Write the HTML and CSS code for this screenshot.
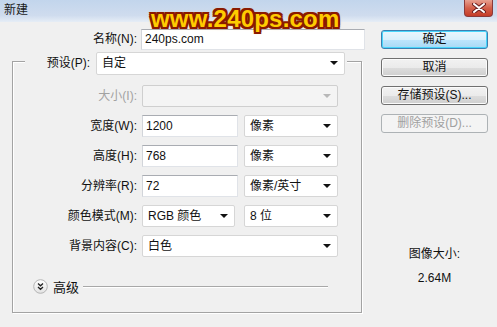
FILE: index.html
```html
<!DOCTYPE html>
<html>
<head>
    <meta charset="utf-8">
    <title>新建</title>
    <link rel="stylesheet" href="styles.css">
</head>
<body>
    <div class="dialog">
        <div class="titlebar">
            <span class="title">新建</span>
            <span class="close">
                <svg width="14" height="10" viewBox="0 0 14 10">
                    <path d="M2 1 L12 9 M12 1 L2 9" stroke="#6b2020" stroke-width="4" stroke-linecap="round"/>
                    <path d="M2 1 L12 9 M12 1 L2 9" stroke="#ffffff" stroke-width="2" stroke-linecap="round"/>
                </svg>
            </span>
        </div>
        <div class="watermark">www.240ps.com</div>

        <div class="content">
            <div class="form">
                <div class="name-row">
                    <label class="name-label">名称(N):</label>
                    <div class="textbox name-box">240ps.com</div>
                </div>

                <div class="group">
                    <div class="preset-row">
                        <label class="preset-label">预设(P):</label>
                        <div class="select preset-select">自定<span class="arrow"></span></div>
                    </div>

                    <div class="row">
                        <label class="lbl disabled">大小(I):</label>
                        <div class="select off wide"><span class="arrow"></span></div>
                    </div>
                    <div class="row">
                        <label class="lbl">宽度(W):</label>
                        <div class="textbox num">1200</div>
                        <div class="select unit">像素<span class="arrow"></span></div>
                    </div>
                    <div class="row">
                        <label class="lbl">高度(H):</label>
                        <div class="textbox num">768</div>
                        <div class="select unit">像素<span class="arrow"></span></div>
                    </div>
                    <div class="row">
                        <label class="lbl">分辨率(R):</label>
                        <div class="textbox num">72</div>
                        <div class="select unit">像素/英寸<span class="arrow"></span></div>
                    </div>
                    <div class="row">
                        <label class="lbl">颜色模式(M):</label>
                        <div class="select mode">RGB 颜色<span class="arrow"></span></div>
                        <div class="select unit">8 位<span class="arrow"></span></div>
                    </div>
                    <div class="row">
                        <label class="lbl">背景内容(C):</label>
                        <div class="select wide">白色<span class="arrow"></span></div>
                    </div>

                    <div class="advanced">
                        <svg class="adv-icon" width="15" height="15" viewBox="0 0 15 15">
                            <defs>
                                <linearGradient id="knob" x1="0" y1="0" x2="0" y2="1">
                                    <stop offset="0" stop-color="#ffffff"/>
                                    <stop offset="1" stop-color="#e2e2e2"/>
                                </linearGradient>
                            </defs>
                            <circle cx="7.5" cy="7.5" r="6.8" fill="url(#knob)" stroke="#b4b4b4"/>
                            <path d="M5 4.5 L7.5 6.8 L10 4.5 M5 8 L7.5 10.3 L10 8" fill="none" stroke="#222" stroke-width="1.3"/>
                        </svg>
                        <span class="adv-text">高级</span>
                        <span class="adv-line"></span>
                    </div>
                </div>
            </div>

            <div class="side">
                <div class="btn default">确定</div>
                <div class="btn">取消</div>
                <div class="btn">存储预设(S)...</div>
                <div class="btn off">删除预设(D)...</div>
                <div class="info">
                    <div>图像大小:</div>
                    <div class="size">2.64M</div>
                </div>
            </div>
        </div>
    </div>
</body>
</html>
```

FILE: styles.css
```css
body {
    margin: 0;
    font-family: 'Liberation Sans', 'Noto Sans CJK SC', sans-serif;
    font-size: 12px;
    color: #111;
    background-color: #f0f0f0;
}

.dialog {
    position: relative;
    width: 497px;
    height: 327px;
    overflow: hidden;
    background-color: #f0f0f0;
}

.titlebar {
    height: 22px;
    display: flex;
    align-items: flex-start;
    justify-content: space-between;
    background: linear-gradient(to bottom, #c2d5ec 0%, #cfdcee 70%, #e6edf6 100%);
}

.title {
    padding: 3px 0 0 4px;
    font-size: 12px;
    line-height: 14px;
    color: #1a1a1a;
}

.close {
    width: 27px;
    height: 16px;
    margin-right: 4px;
    display: flex;
    align-items: center;
    justify-content: center;
    border: 1px solid #8a3a3a;
    border-top: none;
    border-radius: 0 0 4px 4px;
    background: linear-gradient(to bottom, #e8a090 0%, #d4604a 50%, #c43c28 100%);
}

.watermark {
    position: absolute;
    left: 151px;
    top: 5px;
    font-family: 'Liberation Sans', sans-serif;
    font-size: 24px;
    font-weight: bold;
    letter-spacing: 0.2px;
    color: #ffcc00;
    text-shadow:
        2px 0 0 #8a1a00, -2px 0 0 #8a1a00, 0 2px 0 #8a1a00, 0 -2px 0 #8a1a00,
        2px 2px 0 #8a1a00, -2px -2px 0 #8a1a00, 2px -2px 0 #8a1a00, -2px 2px 0 #8a1a00,
        0 0 4px #f6c070;
}

.content {
    display: flex;
    padding-top: 7px;
}

.form {
    width: 365px;
}

.name-row {
    display: flex;
    height: 21px;
}

.name-label {
    width: 139px;
    padding-right: 2px;
    box-sizing: border-box;
    text-align: right;
    line-height: 21px;
}

.textbox {
    height: 21px;
    box-sizing: border-box;
    padding-left: 3px;
    line-height: 19px;
    background-color: #fff;
    border: 1px solid #e0e3e8;
    border-top-color: #a9acb2;
    border-left-color: #d2d5da;
}

.name-box {
    margin-left: 2px;
    width: 224px;
}

.group {
    margin: 11px 0 0 12px;
    width: 350px;
    height: 252px;
    box-sizing: border-box;
    border: 1px solid #a3a3a3;
    box-shadow: 1px 1px 0 #ffffff, inset 1px 1px 0 #ffffff;
}

.preset-row {
    display: flex;
    width: 322px;
    height: 23px;
    margin: -10px 0 0 12px;
    background-color: #f0f0f0;
}

.preset-label {
    width: 68px;
    padding-right: 3px;
    box-sizing: border-box;
    text-align: right;
    line-height: 23px;
}

.select {
    position: relative;
    height: 22px;
    box-sizing: border-box;
    padding-left: 5px;
    line-height: 20px;
    background-color: #fff;
    border: 1px solid #d6d6d6;
    border-radius: 2px;
}

.preset-select {
    margin-left: 3px;
    width: 249px;
    height: 23px;
    line-height: 21px;
}

.arrow {
    position: absolute;
    right: 6px;
    top: 8px;
    width: 0;
    height: 0;
    border-left: 4px solid transparent;
    border-right: 4px solid transparent;
    border-top: 4px solid #111;
}

.row {
    display: flex;
    margin-top: 8px;
}

.preset-row + .row {
    margin-top: 10px;
}

.lbl {
    width: 126px;
    padding-right: 2px;
    box-sizing: border-box;
    text-align: right;
    line-height: 22px;
}

.row > .textbox,
.row > .select:first-of-type {
    margin-left: 3px;
}

.row .textbox {
    height: 22px;
    line-height: 20px;
}

.disabled {
    color: #a2a2a2;
}

.select.off {
    background-color: #f4f4f4;
    border-color: #cfcfcf;
}

.select.off .arrow {
    border-top-color: #b8b8b8;
}

.wide {
    width: 196px;
}

.num {
    width: 96px;
}

.unit {
    margin-left: 6px;
    width: 94px;
}

.mode {
    width: 93px;
}

.mode + .unit {
    margin-left: 9px;
}

.advanced {
    display: flex;
    align-items: center;
    margin-top: 20px;
    padding-left: 20px;
    padding-right: 33px;
}

.adv-icon {
    display: block;
}

.adv-text {
    margin-left: 5px;
    font-size: 13px;
}

.adv-line {
    flex: 1;
    height: 1px;
    margin-left: 4px;
    background-color: #a8a8a8;
    box-shadow: 0 1px 0 #ffffff;
}

.side {
    margin: 1px 0 0 16px;
    width: 107px;
}

.btn {
    height: 19px;
    margin-bottom: 9px;
    box-sizing: border-box;
    text-align: center;
    line-height: 17px;
    border: 1px solid #707070;
    border-radius: 3px;
    background: linear-gradient(to bottom, #f2f2f2 0%, #ebebeb 50%, #dddddd 51%, #cfcfcf 100%);
    box-shadow: inset 0 0 0 1px #fbfbfb;
}

.btn.default {
    border-color: #3c7fb1;
    background: linear-gradient(to bottom, #eaf6fd 0%, #d9f0fc 50%, #bee6fd 51%, #a7d9f5 100%);
    box-shadow: inset 0 0 0 1px #48d6fb;
}

.btn.off {
    color: #a0a0a0;
    border-color: #adb2b5;
    background: #f4f4f4;
    box-shadow: none;
}

.info {
    margin-top: 113px;
    text-align: center;
    line-height: 16px;
}

.size {
    margin-top: 8px;
}
```
